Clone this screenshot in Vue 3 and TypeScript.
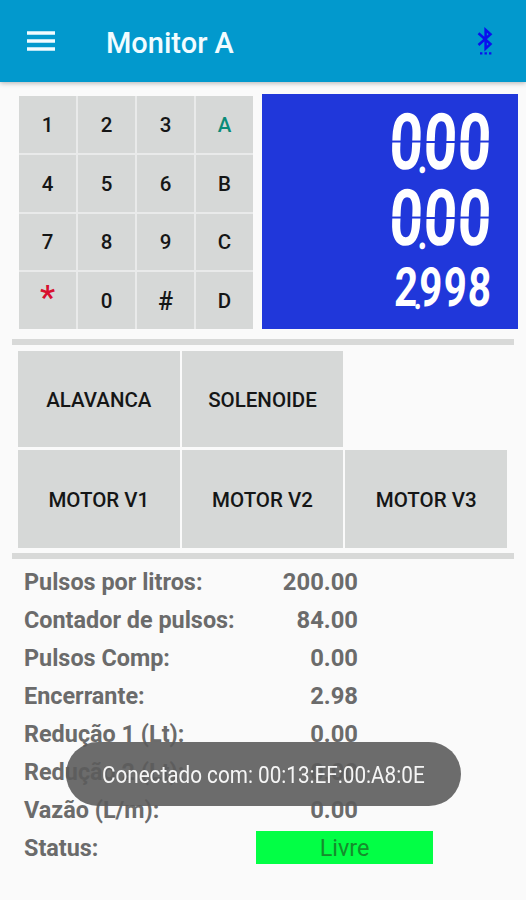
<script setup lang="ts">
interface Key {
  label: string
  tone?: 'teal' | 'red' | 'hash'
}

interface Reading {
  label: string
  value: string
}

const keys: Key[] = [
  { label: '1' }, { label: '2' }, { label: '3' }, { label: 'A', tone: 'teal' },
  { label: '4' }, { label: '5' }, { label: '6' }, { label: 'B' },
  { label: '7' }, { label: '8' }, { label: '9' }, { label: 'C' },
  { label: '*', tone: 'red' }, { label: '0' }, { label: '#', tone: 'hash' }, { label: 'D' },
]

const lcdLines: string[] = ['0.00', '0.00', '2.998']

const actions: string[] = ['ALAVANCA', 'SOLENOIDE']
const motors: string[] = ['MOTOR V1', 'MOTOR V2', 'MOTOR V3']

const readings: Reading[] = [
  { label: 'Pulsos por litros:', value: '200.00' },
  { label: 'Contador de pulsos:', value: '84.00' },
  { label: 'Pulsos Comp:', value: '0.00' },
  { label: 'Encerrante:', value: '2.98' },
  { label: 'Redução 1 (Lt):', value: '0.00' },
  { label: 'Redução 2 (Lt):', value: '0.00' },
  { label: 'Vazão (L/m):', value: '0.00' },
]
</script>

<template>
  <div class="screen">
    <header class="bar">
      <svg class="menu" viewBox="0 0 28 20" aria-hidden="true">
        <path d="M0 2h28M0 10h28M0 18h28" stroke="currentColor" stroke-width="3.4" />
      </svg>
      <h1 class="title">Monitor A</h1>
      <svg class="bluetooth" viewBox="0 0 16 30" aria-hidden="true">
        <path d="M1.5 6.2 13.5 17 8.6 21.6V2.8L13.5 7.2 1.5 18" fill="none" stroke="currentColor" stroke-width="2.5" />
        <path d="M3 26.4h2.4M7.5 26.4h2.4M12 26.4h2.4" stroke="currentColor" stroke-width="2.2" />
      </svg>
    </header>

    <section class="top">
      <div class="keypad">
        <button v-for="key in keys" :key="key.label" class="key" :class="key.tone">{{ key.label }}</button>
      </div>
      <div class="lcd">
        <div v-for="(line, i) in lcdLines" :key="i" class="lcd-line" :class="{ small: i === 2 }">
          <span
            v-for="(char, j) in line.split('')"
            :key="j"
            class="digit"
            :class="{ point: char === '.', split: char === '0' }"
          >{{ char }}</span>
        </div>
      </div>
    </section>

    <div class="rule"></div>

    <section class="actions">
      <div class="action-row first">
        <button v-for="name in actions" :key="name" class="action">{{ name }}</button>
      </div>
      <div class="action-row">
        <button v-for="name in motors" :key="name" class="action">{{ name }}</button>
      </div>
    </section>

    <div class="rule"></div>

    <section class="readings">
      <div v-for="row in readings" :key="row.label" class="reading">
        <span class="label">{{ row.label }}</span>
        <span class="value">{{ row.value }}</span>
      </div>
      <div class="reading">
        <span class="label">Status:</span>
        <span class="status">Livre</span>
      </div>
    </section>

    <div class="toast"><span class="toast-text">Conectado com: 00:13:EF:00:A8:0E</span></div>
  </div>
</template>

<style>
body {
  background: #fafafa;
}
</style>

<style scoped>
.screen {
  position: relative;
  box-sizing: border-box;
  width: 526px;
  height: 900px;
  overflow: hidden;
  background: #fafafa;
  font-family: Roboto, "Liberation Sans", sans-serif;
}

.bar {
  display: flex;
  align-items: center;
  box-sizing: border-box;
  height: 82px;
  padding: 3px 33px 0 27px;
  background: #0299cd;
  box-shadow: 0 1px 5px rgba(0, 0, 0, 0.3);
  color: #f2fcff;
}

.menu {
  width: 28px;
  height: 20px;
  margin-top: -3px;
}

.title {
  flex: 1;
  margin: 0 0 0 51px;
  font-size: 29px;
  font-weight: 500;
  line-height: 34px;
}

.bluetooth {
  width: 16px;
  height: 30px;
  margin-top: -2px;
  color: #0a10ee;
}

.top {
  display: flex;
  align-items: flex-end;
  gap: 9px;
  height: 235px;
  padding: 12px 8px 0 19px;
}

.keypad {
  display: grid;
  grid-template-columns: repeat(4, 1fr);
  grid-template-rows: repeat(4, 1fr);
  gap: 2px;
  width: 234px;
  height: 233px;
  background: #e9eaea;
}

.key,
.action {
  padding: 2px 0 0;
  border: 0;
  background: #d6d8d7;
  color: #151616;
  font-family: inherit;
  font-size: 20.5px;
  font-weight: 500;
}

.key {
  padding-top: 1px;
}

.key.teal {
  color: #0b8b78;
}

.key.red {
  padding: 0 0 7px;
  color: #d8102f;
  font-size: 34px;
  line-height: 34px;
}

.key.hash {
  font-size: 25px;
}

.lcd {
  flex: 1;
  box-sizing: border-box;
  height: 235px;
  padding: 15px 25px 0 0;
  background: #2037da;
}

.lcd-line {
  display: flex;
  justify-content: flex-end;
  height: 76px;
  line-height: 67px;
  color: #fff;
  font-size: 78px;
  font-weight: 700;
  transform: scaleX(0.75) skewX(-3deg);
  transform-origin: right top;
}

.lcd-line.small {
  font-size: 54px;
  line-height: 54px;
}

.digit {
  width: 45.5px;
  height: 70px;
  text-align: center;
}

.small .digit {
  width: 32.7px;
  height: 52px;
}

.digit.split {
  background: linear-gradient(#fff 0 32px, #2037da 32px 34px, #fff 34px);
  background-clip: text;
  -webkit-background-clip: text;
  color: transparent;
}

.digit.point,
.small .digit.point {
  display: flex;
  justify-content: center;
  width: 0;
  font-size: 46px;
  line-height: 96px;
}

.small .digit.point {
  font-size: 38px;
  line-height: 71px;
}

.rule {
  height: 6px;
  margin: 10px 12px 0 12px;
  background: #d8d9d8;
}

.actions {
  display: flex;
  flex-direction: column;
  gap: 3px;
  height: 197px;
  padding: 6px 19px 0 18px;
}

.action-row {
  display: grid;
  grid-template-columns: repeat(3, 1fr);
  gap: 2px;
  height: 98px;
}

.action-row.first {
  height: 96px;
}

.actions + .rule {
  margin-top: 5px;
}

.readings {
  padding: 4px 0 0 24px;
  color: #6b6b6b;
  font-size: 23.4px;
}

.reading {
  display: flex;
  align-items: center;
  height: 38px;
}

.label {
  width: 232px;
  font-weight: 700;
  white-space: nowrap;
}

.value {
  width: 102px;
  font-size: 23.8px;
  font-weight: 700;
  text-align: right;
}

.status {
  width: 177px;
  height: 33px;
  margin-top: -2px;
  background: #02ff45;
  color: #168c2c;
  line-height: 35px;
  text-align: center;
}

.toast {
  position: absolute;
  top: 742px;
  left: 66px;
  display: flex;
  align-items: center;
  justify-content: center;
  box-sizing: border-box;
  width: 395px;
  height: 64px;
  padding-top: 2px;
  border-radius: 32px;
  background: rgba(92, 92, 92, 0.9);
  color: #f5f5f5;
  font-size: 23px;
  white-space: nowrap;
}

.toast-text {
  transform: scaleX(0.9);
}
</style>
